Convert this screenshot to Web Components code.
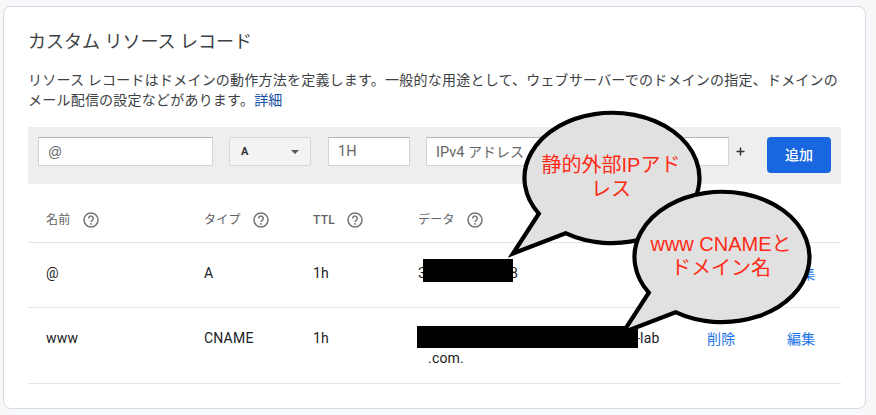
<!DOCTYPE html>
<html lang="ja">
<head>
<meta charset="utf-8">
<title>カスタム リソース レコード</title>
<style>
html,body{margin:0;height:100%}
body{background:#f7f8fa;overflow:hidden;position:relative;display:flow-root;font-family:Roboto,"Noto Sans CJK JP",sans-serif;color:#202124}
</style>
</head>
<body>
<record-card>
  <span slot="title">カスタム リソース レコード</span>
  <span slot="lead">リソース レコードはドメインの動作方法を定義します。一般的な用途として、ウェブサーバーでのドメインの指定、ドメインの<br>メール配信の設定などがあります。</span>
  <span slot="more">詳細</span>
  <record-form></record-form>
  <record-row style="--h:58px;--top:25px">
    <help-label slot="name">名前</help-label>
    <help-label slot="type">タイプ</help-label>
    <help-label slot="ttl" style="font-weight:500">TTL</help-label>
    <help-label slot="data">データ</help-label>
  </record-row>
  <record-row style="--h:64px;--top:20px">
    <span slot="name">@</span><span slot="type">A</span><span slot="ttl">1h</span>
    <redacted-text slot="data" style="--w:90px;--bh:23px;--ml:-3px;--mr:-3px;--dy:-4px"><span slot="before">3</span><span slot="after">8</span></redacted-text>
    <span slot="edit">編集</span>
  </record-row>
  <record-row style="--h:75px;--top:20px">
    <span slot="name">www</span><span slot="type">CNAME</span><span slot="ttl">1h</span>
    <redacted-text slot="data" style="--w:221px;--bh:22px;--ml:-1px;--mr:-2px;--dy:-2px"><span slot="after">-lab</span><span slot="next">.com.</span></redacted-text>
    <span slot="remove">削除</span><span slot="edit">編集</span>
  </record-row>
</record-card>
<speech-bubble style="left:508px;top:106px">静的外部IPアド<br>レス</speech-bubble>
<speech-bubble style="left:618px;top:185px">www CNAMEと<br>ドメイン名</speech-bubble>

<script>
const define = (name, html) => customElements.define(name, class extends HTMLElement {
  constructor() {
    super();
    this.attachShadow({ mode: 'open' }).innerHTML = html;
  }
});

define('record-card', `<style>
:host{display:block;box-sizing:border-box;width:863px;height:403px;margin:6px 0 0 3px;background:#fff;border:1px solid #d6d9dd;border-radius:8px;padding:23px 24px 0}
h2{margin:0;font-weight:400;font-size:18px;line-height:24px;color:#3c4043}
p{margin:16px -10px 0 0;font-size:14px;line-height:20px;letter-spacing:.22px;height:57px;color:#3c4043;white-space:nowrap}
a{color:#174ea6}
</style><h2><slot name="title"></slot></h2><p><slot name="lead"></slot><a><slot name="more"></slot></a></p><slot></slot>`);

define('record-form', `<style>
:host{display:flex;box-sizing:border-box;height:57px;width:813px;background:#eee;padding:10px 10px 0;align-items:flex-start;color:#666;font-size:14.5px}
.f{box-sizing:border-box;height:29px;line-height:28px;background:#fff;border:1px solid #d4d4d4;border-top-color:#b5b5b5;padding-left:9px;white-space:nowrap}
.name{width:175px;margin-right:16px;font:14px/29px "Liberation Sans",sans-serif;padding-left:9px}
.sel{display:flex;align-items:center;justify-content:space-between;width:82px;margin-right:17px;background:#f3f3f3;border-color:#d8d8d8;border-radius:2px;padding:0 11px;font-size:11px;line-height:27px;font-weight:700;color:#333}
.ttl{width:82px;margin-right:16px}
.data{width:303px}
.jp{font-size:14px}
.plus{width:38px;box-sizing:border-box;padding:10px 0 0 7px;height:29px}
svg{display:block}
button{all:unset;box-sizing:border-box;width:64px;height:36px;line-height:35px;text-align:center;border-radius:4px;background:#1967e0;color:#fff;font-size:14px;font-weight:500}
</style>
<div class="f name">@</div>
<div class="f sel">A<svg width="8" height="4"><path d="M0 0h8L4 4z" fill="#555"/></svg></div>
<div class="f ttl">1H</div>
<div class="f data">IPv4 <span class="jp">アドレス</span></div>
<div class="plus"><svg width="9" height="9"><path d="M4.5 .5v8M.5 4.5h8" stroke="#333" stroke-width="1.5"/></svg></div>
<button>追加</button>`);

define('record-row', `<style>
:host{display:grid;width:795px;height:var(--h);padding-left:18px;border-bottom:1px solid #e4e4e4;grid-template-columns:158px 109px 105px 289px 80px 1fr;font-size:14px;line-height:20px;letter-spacing:.2px;color:#202124;white-space:nowrap}
div{padding-top:var(--top)}
.a{color:#1a73e8;padding-top:calc(var(--top) + 1px)}
</style><div><slot name="name"></slot></div><div><slot name="type"></slot></div><div><slot name="ttl"></slot></div><div><slot name="data"></slot></div><div class="a"><slot name="remove"></slot></div><div class="a"><slot name="edit"></slot></div>`);

define('help-label', `<style>
:host{display:flex;align-items:center;gap:12px;font-size:12px;line-height:20px;height:21px;color:#5f6368;letter-spacing:.3px}
svg{display:block;margin-top:1px}
</style><slot></slot><svg width="16" height="16" viewBox="0 0 16 16" fill="none" stroke="#70757a" stroke-width="1.5"><circle cx="8" cy="8" r="7"/><path d="M5.7 6.4a2.3 2.3 0 1 1 3.7 1.8C8.5 8.9 8 9.1 8 10"/><path d="M8 11.1v1.6"/></svg>`);

define('redacted-text', `<style>
:host{display:block}
.l{display:flex;align-items:flex-start;height:20px}
i{display:block;background:#000;width:var(--w);height:var(--bh);margin:var(--dy) var(--mr) 0 var(--ml);position:relative;z-index:1;flex:none}
.n{padding-left:10px}
</style><div class="l"><slot name="before"></slot><i></i><slot name="after"></slot></div><div class="n"><slot name="next"></slot></div>`);

define('speech-bubble', `<style>
:host{position:absolute;z-index:3;display:grid;width:196px;height:156px;font:20px/24px "Liberation Sans","Noto Sans CJK JP",sans-serif;color:#ff2a16;text-align:center}
svg,div{grid-area:1/1}
svg{display:block;overflow:visible}
div{padding:47px 0 0 10px;white-space:nowrap}
</style><svg width="196" height="156"><path d="M57.5 127.2A87.5 65.2 0 1 0 30.8 107.7L5 147.5Z" fill="#e1e1e1" stroke="#000" stroke-width="4.2"/></svg><div><slot></slot></div>`);
</script>
</body>
</html>
